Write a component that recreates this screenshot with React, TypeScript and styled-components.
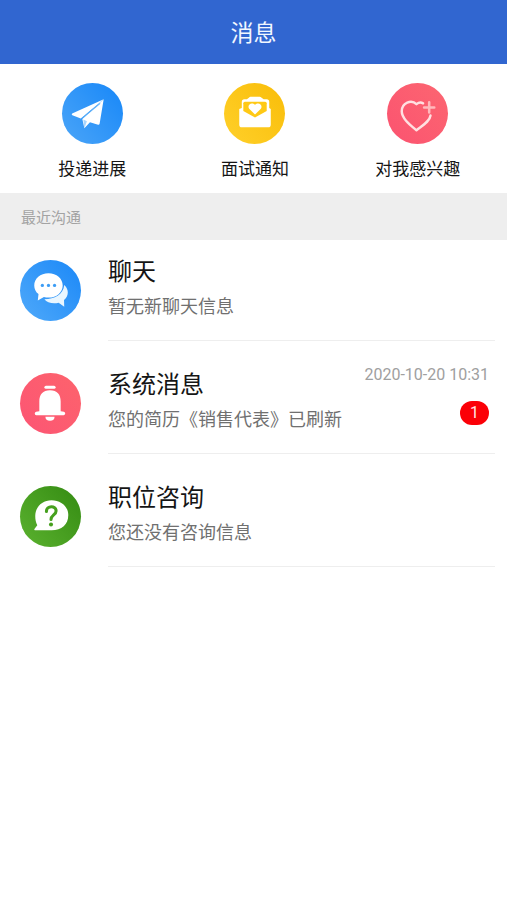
import React from "react";
import styled, { createGlobalStyle } from "styled-components";

const GlobalStyle = createGlobalStyle`
  * { box-sizing: border-box; }
  body {
    margin: 0;
    background: #fff;
    color: #151515;
    font-family: Roboto, "Noto Sans CJK SC", sans-serif;
  }
`;

const Header = styled.header`
  display: flex;
  align-items: center;
  justify-content: center;
  height: 64px;
  padding-top: 4px;
  background: #3166d0;
`;

const HeaderTitle = styled.h1`
  margin: 0;
  color: #f2f7ff;
  font-size: 23px;
  font-weight: 400;
  line-height: 32px;
`;

const Shortcuts = styled.nav`
  display: grid;
  grid-template-columns: repeat(3, 1fr);
  padding: 19px 8px 11px 11px;
`;

const Shortcut = styled.button`
  display: flex;
  flex-direction: column;
  align-items: center;
  gap: 12px;
  padding: 0;
  border: 0;
  background: none;
  color: inherit;
  font: inherit;
  font-size: 17px;
  line-height: 26px;
  cursor: pointer;
`;

const Disc = styled.span<{ $from: string; $to: string }>`
  display: block;
  flex: none;
  width: 61px;
  height: 61px;
  border-radius: 50%;
  background: linear-gradient(50deg, ${(p) => p.$from}, ${(p) => p.$to});

  svg {
    display: block;
    width: 100%;
    height: 100%;
  }
`;

const SectionTitle = styled.h2`
  margin: 0;
  padding: 13px 21px 10px;
  background: #eee;
  color: #a3a3a3;
  font-size: 15px;
  font-weight: 400;
  line-height: 24px;
`;

const List = styled.ul`
  display: flex;
  flex-direction: column;
  gap: 32px;
  margin: 0;
  padding: 20px 12px 0 20px;
  list-style: none;
`;

const Row = styled.li`
  display: flex;
  gap: 27px;
`;

const RowBody = styled.div`
  display: flex;
  flex: 1;
  justify-content: space-between;
  min-width: 0;
  padding: 0 6px 19px 0;
  border-bottom: 1px solid #eee;
`;

const Texts = styled.div`
  display: flex;
  flex-direction: column;
  gap: 9px;
`;

const Title = styled.h3`
  margin: 0;
  font-size: 24px;
  font-weight: 400;
  line-height: 24px;
`;

const Detail = styled.p`
  margin: 0;
  color: #707070;
  font-size: 18px;
  line-height: 28px;
`;

const Meta = styled.div`
  display: flex;
  flex-direction: column;
  align-items: flex-end;
  gap: 16px;
`;

const Time = styled.time`
  margin-top: -8px;
  color: #a0a0a0;
  font-size: 16px;
  line-height: 20px;
  white-space: nowrap;
`;

const Badge = styled.span`
  min-width: 29px;
  border-radius: 12px;
  background: #fb0007;
  color: #ffe3e3;
  font-size: 16px;
  line-height: 24px;
  text-align: center;
`;

const PlaneIcon = () => (
  <svg viewBox="0 0 60 60" aria-hidden="true">
    <path fill="#fff" d="M41 16 10 30q-1 1 .2 1.700L18.500 35Z" />
    <path fill="#fff" d="M41 16 20 35.500 22 44.500l5.500-6 8 2.500q1.200.2 1.500-1Z" />
    <path fill="none" stroke="#5aaef8" strokeWidth="1" d="M37.500 20 19.500 35" />
    <path fill="#a9d5fc" d="m21 36 1 8.500 2.500-7Z" />
  </svg>
);

const LetterIcon = () => (
  <svg viewBox="0 0 60 60" aria-hidden="true">
    <path
      fill="#fff"
      d="M26 13.500h9q1 0 2 1l2 1.500h3q2.500 0 2.500 2.500v6l1.500 1v15.500q0 2.500-2.500 2.500h-26Q15 43.500 15 41V25.500l2.500-1v-6q0-2.500 2.500-2.500h2.500l2-1.500q.8-1 1.500-1Z"
    />
    <path
      fill="#ffc915"
      d="M20.500 18.500h20q1.500 0 1.500 1.500v7.500L30.500 34 19 27.500V20q0-1.500 1.500-1.500Z"
    />
    <path
      fill="#fff"
      d="M30.500 31 25 25.500c-3-3.500 2-7.500 5.500-4 3.500-3.500 8.500.5 5.500 4Z"
    />
  </svg>
);

const HeartPlusIcon = () => (
  <svg viewBox="0 0 60 60" aria-hidden="true" fill="none" strokeLinecap="round" strokeLinejoin="round">
    <path
      stroke="#ffe0e1"
      strokeWidth="2.400"
      d="M35.500 20c-2.500-1.500-4.500-.8-6.500.8-5-5-14.500-1.500-14.500 7 0 7 8 13.200 14.500 18.700C35.500 41.500 42 38 42.800 32"
    />
    <path stroke="#ffb9bc" strokeWidth="2.500" d="M41.500 19v10M36.500 24h10" />
  </svg>
);

const ChatIcon = () => (
  <svg viewBox="0 0 60 60" aria-hidden="true">
    <path
      fill="#e9f6ff"
      d="M43.500 24.500c5 4.500 4.500 11-.2 14.800l.2 6.700-5.500-4c-6 1.500-11.500-.3-14-3.500C34 38.500 42.500 34 43.500 24.500Z"
    />
    <path
      fill="#fff"
      d="M28 13c8 0 14 5.300 14 12s-6 12-14 12c-1.500 0-3-.2-4.500-.6L17.500 39.800l.7-6.300C15.500 31.400 14 28.500 14 25 14 18.300 20 13 28 13Z"
    />
    <g fill="#3d9df5">
      <circle cx="22" cy="25" r="1.600" />
      <circle cx="28" cy="25" r="1.600" />
      <circle cx="34" cy="25" r="1.600" />
    </g>
  </svg>
);

const BellIcon = () => (
  <svg viewBox="0 0 60 60" aria-hidden="true" fill="#fff">
    <rect x="24" y="12.500" width="11" height="3" rx="1.500" />
    <path d="M19 37.500V28c0-7 3.500-11 10.500-11S40 21 40 28v9.500l3.200.5q1.300.5 1.300 1.800T43 41.500H16q-1.500-.3-1.500-1.700t1.300-1.800Z" />
    <path d="M25 43h9q0 4-4.500 4T25 43Z" />
  </svg>
);

const QuestionIcon = () => (
  <svg viewBox="0 0 60 60" aria-hidden="true">
    <path
      fill="#fff"
      d="M31 14c9 0 16.500 6 16.500 14.500C47.500 38 41 43.500 31 43.500H14.500q-.8-.5-.3-1.200L17 38.500c-1.500-3-2-5.500-2-9C15 20.500 22 14 31 14Z"
    />
    <path
      fill="none"
      stroke="#46a01e"
      strokeWidth="3"
      strokeLinecap="round"
      d="M26 25c0-6 9.500-6 9.500-.5 0 4-5 4-5 8.500"
    />
    <circle cx="30.500" cy="37.800" r="2" fill="#46a01e" />
  </svg>
);

const shortcuts = [
  { label: "投递进展", from: "#4ba5f8", to: "#1787f8", icon: <PlaneIcon /> },
  { label: "面试通知", from: "#ffd02a", to: "#f9bd08", icon: <LetterIcon /> },
  { label: "对我感兴趣", from: "#fb5370", to: "#fc6671", icon: <HeartPlusIcon /> },
];

const conversations = [
  {
    title: "聊天",
    detail: "暂无新聊天信息",
    from: "#4fa9fa",
    to: "#1b88f7",
    icon: <ChatIcon />,
  },
  {
    title: "系统消息",
    detail: "您的简历《销售代表》已刷新",
    from: "#fc5574",
    to: "#fd636c",
    icon: <BellIcon />,
    time: "2020-10-20 10:31",
    unread: 1,
  },
  {
    title: "职位咨询",
    detail: "您还没有咨询信息",
    from: "#5bb22f",
    to: "#348b12",
    icon: <QuestionIcon />,
  },
];

export default function App() {
  return (
    <>
      <GlobalStyle />
      <Header>
        <HeaderTitle>消息</HeaderTitle>
      </Header>
      <main lang="zh-CN">
        <Shortcuts>
          {shortcuts.map((s) => (
            <Shortcut key={s.label} type="button">
              <Disc $from={s.from} $to={s.to}>{s.icon}</Disc>
              {s.label}
            </Shortcut>
          ))}
        </Shortcuts>
        <SectionTitle>最近沟通</SectionTitle>
        <List>
          {conversations.map((c) => (
            <Row key={c.title}>
              <Disc $from={c.from} $to={c.to}>{c.icon}</Disc>
              <RowBody>
                <Texts>
                  <Title>{c.title}</Title>
                  <Detail>{c.detail}</Detail>
                </Texts>
                {c.time && (
                  <Meta>
                    <Time>{c.time}</Time>
                    <Badge>{c.unread}</Badge>
                  </Meta>
                )}
              </RowBody>
            </Row>
          ))}
        </List>
      </main>
    </>
  );
}
